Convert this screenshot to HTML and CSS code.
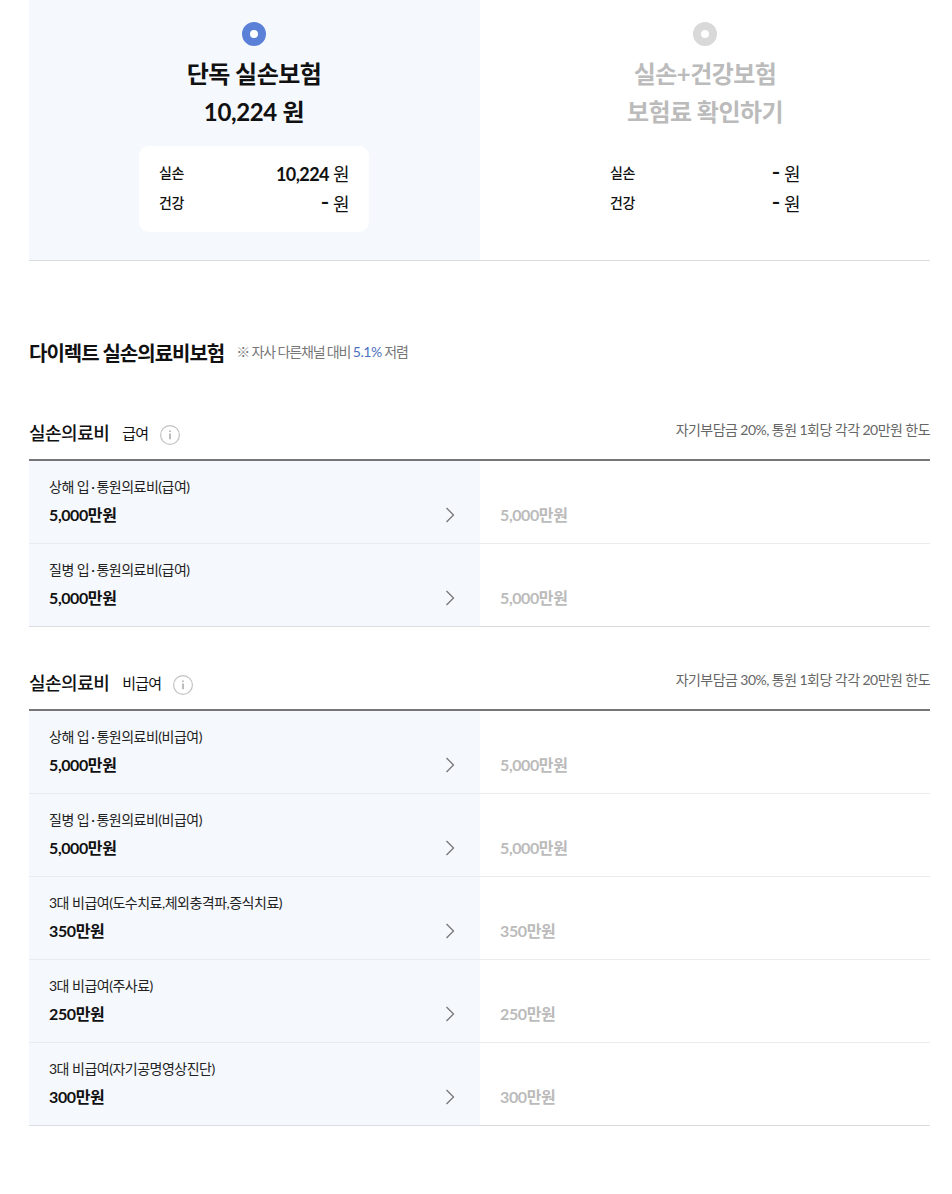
FILE: index.html
```html
<!DOCTYPE html>
<html lang="ko">
<head>
<meta charset="utf-8">
<title>다이렉트 실손의료비보험</title>
<link rel="stylesheet" href="styles.css">
</head>
<body>
<main class="page">
  <section class="plans">
    <div class="plan plan-on">
      <span class="dot"></span>
      <h2 class="plan-title">단독 실손보험</h2>
      <p class="plan-title plan-price">10,224 원</p>
      <div class="price-box">
        <div class="price-row"><span class="price-label">실손</span><span class="price-val"><b>10,224</b> 원</span></div>
        <div class="price-row"><span class="price-label">건강</span><span class="price-val"><b class="dash">-</b> 원</span></div>
      </div>
    </div>
    <div class="plan plan-off">
      <span class="dot"></span>
      <h2 class="plan-title">실손+건강보험</h2>
      <p class="plan-title">보험료 확인하기</p>
      <div class="price-box">
        <div class="price-row"><span class="price-label">실손</span><span class="price-val"><b class="dash">-</b> 원</span></div>
        <div class="price-row"><span class="price-label">건강</span><span class="price-val"><b class="dash">-</b> 원</span></div>
      </div>
    </div>
  </section>

  <header class="product">
    <h1 class="product-title">다이렉트 실손의료비보험</h1>
    <p class="product-note">※ 자사 다른채널 대비 <em>5.1%</em> 저렴</p>
  </header>

  <section class="group group-first">
    <div class="group-head">
      <div class="group-name"><h3>실손의료비</h3><span>급여</span>
        <svg class="info" viewBox="0 0 20 20"><circle cx="10" cy="10" r="9.4"/><path class="info-i" d="M10 8.6v5.6"/><path class="info-i" d="M10 5.4v1.6"/></svg>
      </div>
      <p class="group-desc">자기부담금 20%, 통원 1회당 각각 20만원 한도</p>
    </div>
    <div class="rows">
      <div class="row"><div class="cell-main"><div><p class="row-label">상해 입<span class="mid">·</span>통원의료비(급여)</p><p class="row-amount">5,000만원</p></div><svg class="chev" viewBox="0 0 10 16"><path d="M1.5 1l7 7-7 7"/></svg></div><div class="cell-alt">5,000만원</div></div>
      <div class="row"><div class="cell-main"><div><p class="row-label">질병 입<span class="mid">·</span>통원의료비(급여)</p><p class="row-amount">5,000만원</p></div><svg class="chev" viewBox="0 0 10 16"><path d="M1.5 1l7 7-7 7"/></svg></div><div class="cell-alt">5,000만원</div></div>
    </div>
  </section>

  <section class="group">
    <div class="group-head">
      <div class="group-name"><h3>실손의료비</h3><span>비급여</span>
        <svg class="info" viewBox="0 0 20 20"><circle cx="10" cy="10" r="9.4"/><path class="info-i" d="M10 8.6v5.6"/><path class="info-i" d="M10 5.4v1.6"/></svg>
      </div>
      <p class="group-desc">자기부담금 30%, 통원 1회당 각각 20만원 한도</p>
    </div>
    <div class="rows">
      <div class="row"><div class="cell-main"><div><p class="row-label">상해 입<span class="mid">·</span>통원의료비(비급여)</p><p class="row-amount">5,000만원</p></div><svg class="chev" viewBox="0 0 10 16"><path d="M1.5 1l7 7-7 7"/></svg></div><div class="cell-alt">5,000만원</div></div>
      <div class="row"><div class="cell-main"><div><p class="row-label">질병 입<span class="mid">·</span>통원의료비(비급여)</p><p class="row-amount">5,000만원</p></div><svg class="chev" viewBox="0 0 10 16"><path d="M1.5 1l7 7-7 7"/></svg></div><div class="cell-alt">5,000만원</div></div>
      <div class="row"><div class="cell-main"><div><p class="row-label">3대 비급여(도수치료,체외충격파,증식치료)</p><p class="row-amount">350만원</p></div><svg class="chev" viewBox="0 0 10 16"><path d="M1.5 1l7 7-7 7"/></svg></div><div class="cell-alt">350만원</div></div>
      <div class="row"><div class="cell-main"><div><p class="row-label">3대 비급여(주사료)</p><p class="row-amount">250만원</p></div><svg class="chev" viewBox="0 0 10 16"><path d="M1.5 1l7 7-7 7"/></svg></div><div class="cell-alt">250만원</div></div>
      <div class="row"><div class="cell-main"><div><p class="row-label">3대 비급여(자기공명영상진단)</p><p class="row-amount">300만원</p></div><svg class="chev" viewBox="0 0 10 16"><path d="M1.5 1l7 7-7 7"/></svg></div><div class="cell-alt">300만원</div></div>
    </div>
  </section>
</main>
</body>
</html>
```
FILE: styles.css
```css
* { box-sizing: border-box; }
html, body { margin: 0; padding: 0; background: #fff; }
body {
  font-family: Lato, "Noto Sans CJK KR", sans-serif;
  color: #111;
  letter-spacing: -0.5px;
}
h1, h2, h3, p { margin: 0; font: inherit; }
.page { width: 930px; height: 1194px; margin-left: 29px; overflow: hidden; }

.plans { display: grid; grid-template-columns: 451px 450px; height: 261px; border-bottom: 1px solid #d9dde0; width: 901px; }
.plan { display: flex; flex-direction: column; align-items: center; padding-top: 22px; }
.plan-on { background: #f5f8fd; padding-right: 1px; }
.dot { width: 24px; height: 24px; border-radius: 50%; border: 8px solid #5b80d8; background: #fff; margin-bottom: 9px; }
.plan-off .dot { border-color: #d9d9d9; }
.plan-title { font-size: 24px; line-height: 38px; font-weight: 700; letter-spacing: -0.55px; color: #111; text-align: center; }
.plan-price { letter-spacing: -0.35px; }
.plan-off .plan-title { color: #bbb; }
.price-box { width: 230px; height: 86px; margin-top: 15px; padding: 13px 20px 0; background: #fff; border-radius: 10px; }
.plan-off .price-box { background: transparent; }
.price-row { display: flex; justify-content: space-between; align-items: center; height: 30px; }
.price-label { font-size: 14px; font-weight: 500; padding-bottom: 4px; }
.price-val { font-size: 18px; line-height: 28px; }
.price-val b { font-weight: 700; letter-spacing: -0.6px; }
.price-val .dash { font-size: 24px; font-weight: 500; line-height: 0; letter-spacing: -0.5px; }

.product { display: flex; align-items: center; gap: 12px; width: 901px; margin-top: 76px; height: 32px; }
.product-title { font-size: 20px; font-weight: 700; letter-spacing: -1px; line-height: 32px; }
.product-note { font-size: 14px; color: #777; letter-spacing: -1.15px; padding-bottom: 4px; }
.product-note em { font-style: normal; color: #4f70c0; letter-spacing: -0.4px; }

.group { width: 901px; margin-top: 28px; }
.group-first { margin-top: 36px; }
.group-head { display: flex; justify-content: space-between; align-items: flex-start; height: 56px; border-bottom: 2px solid #767676; }
.group-name { display: flex; align-items: center; height: 54px; }
.group-name h3 { font-size: 18px; font-weight: 500; letter-spacing: -0.5px; }
.group-name span { font-size: 15px; margin-left: 13px; letter-spacing: -0.8px; }
.info { width: 20px; height: 20px; margin: 6px 0 0 12px; fill: none; stroke: #c2c2c2; stroke-width: 1.2; }
.info-i { stroke: #999; stroke-width: 1.3; }
.group-desc { font-size: 14px; color: #666; line-height: 50px; letter-spacing: -0.55px; }
.row { display: grid; grid-template-columns: 451px 450px; height: 83px; border-bottom: 1px solid #e9ecef; }
.row:last-child { border-bottom-color: #d9dde0; }
.cell-main { display: flex; justify-content: space-between; align-items: flex-start; background: #f5f8fd; padding: 15px 25px 0 20px; }
.row-label { font-size: 14px; line-height: 22px; letter-spacing: -0.5px; color: #222; }
.mid { margin: 0 2px; }
.row-amount { font-size: 16px; font-weight: 700; line-height: 24px; margin-top: 5px; letter-spacing: -0.4px; }
.chev { width: 10px; height: 16px; margin-top: 31px; fill: none; stroke: #777; stroke-width: 1.3; }
.cell-alt { padding: 42px 0 0 20px; font-size: 16px; font-weight: 700; line-height: 24px; color: #bbb; letter-spacing: -0.4px; }
```
